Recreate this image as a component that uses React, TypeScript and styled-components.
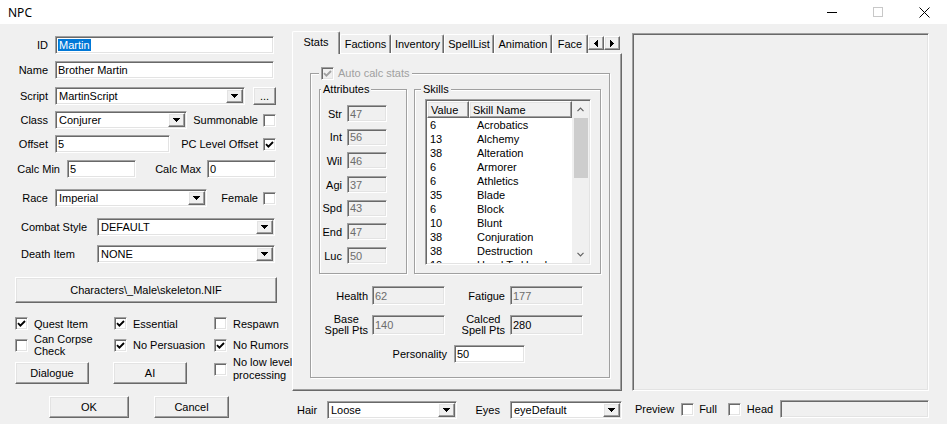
import React from 'react'
import styled, { createGlobalStyle, css } from 'styled-components'

const GlobalStyle = createGlobalStyle`
  html, body {
    margin: 0;
    padding: 0;
  }
  body {
    background: #f0f0f0;
    font-family: "Liberation Sans", Arial, sans-serif;
    font-size: 11px;
    color: #000;
  }
  * {
    box-sizing: border-box;
  }
`

const sunken = css`
  border: 1px solid;
  border-color: #a0a0a0 #fff #fff #a0a0a0;
  box-shadow: inset 1px 1px 0 #696969, inset -1px -1px 0 #e3e3e3;
`

const raised = css`
  border: 1px solid;
  border-color: #fff #696969 #696969 #fff;
  box-shadow: inset -1px -1px 0 #a0a0a0, inset 1px 1px 0 #e3e3e3;
`

const Window = styled.div`
  width: 947px;
  height: 424px;
  background: #f0f0f0;
  overflow: hidden;
  display: flex;
  flex-direction: column;
`

const TitleBar = styled.div`
  height: 24px;
  flex-shrink: 0;
  background: #fff;
  display: flex;
  align-items: center;
  padding-left: 8px;
  font-family: "Noto Sans", "Liberation Sans", sans-serif;
  font-size: 12px;
`

const Title = styled.div`
  flex: 1;
`

const WinControls = styled.div`
  display: flex;
  height: 100%;
`

const WinButton = styled.div`
  width: 46px;
  display: flex;
  align-items: center;
  justify-content: center;
`

const Body = styled.div`
  display: flex;
  flex: 1;
`

/* ---------- shared controls ---------- */

const TextBox = styled.div<{ $w: number; $h?: number; $disabled?: boolean; $dim?: boolean }>`
  ${sunken};
  width: ${p => p.$w}px;
  height: ${p => p.$h ?? 18}px;
  flex-shrink: 0;
  background: ${p => (p.$disabled ? '#f0f0f0' : '#fff')};
  color: ${p => (p.$dim ? '#6d6d6d' : '#000')};
  padding-left: 2px;
  display: flex;
  align-items: center;
  white-space: nowrap;
  overflow: hidden;
`

const Selected = styled.span`
  background: #0078d7;
  color: #fff;
  padding: 0 1px;
`

const Combo = styled.div<{ $w: number }>`
  ${sunken};
  width: ${p => p.$w}px;
  height: 18px;
  flex-shrink: 0;
  background: #fff;
  display: flex;
  align-items: center;
  padding: 1px 1px 1px 3px;
`

const ComboText = styled.div`
  flex: 1;
  white-space: nowrap;
  overflow: hidden;
`

const ComboButton = styled.div`
  ${raised};
  width: 17px;
  height: 14px;
  background: #f0f0f0;
  display: flex;
  align-items: center;
  justify-content: center;
`

const PushButton = styled.div<{ $w: number; $h?: number }>`
  ${raised};
  width: ${p => p.$w}px;
  height: ${p => p.$h ?? 22}px;
  flex-shrink: 0;
  background: #f0f0f0;
  display: flex;
  align-items: center;
  justify-content: center;
  white-space: nowrap;
`

const CheckBox = styled.span<{ $disabled?: boolean }>`
  ${sunken};
  width: 13px;
  height: 13px;
  flex-shrink: 0;
  background: ${p => (p.$disabled ? '#f0f0f0' : '#fff')};
  display: inline-flex;
  align-items: center;
  justify-content: center;
`

const DownArrow = () => (
  <svg width="7" height="4" viewBox="0 0 7 4" shapeRendering="crispEdges">
    <polygon points="0,0 7,0 3.5,4" fill="#000" />
  </svg>
)

const ComboBox = ({ w, value }: { w: number; value: string }) => (
  <Combo $w={w}>
    <ComboText>{value}</ComboText>
    <ComboButton>
      <DownArrow />
    </ComboButton>
  </Combo>
)

const Check = ({ checked, disabled }: { checked?: boolean; disabled?: boolean }) => (
  <CheckBox $disabled={disabled}>
    {checked && (
      <svg width="9" height="9" viewBox="0 0 9 9">
        <path
          d="M1 4.2 L3.4 6.6 L8 2"
          fill="none"
          stroke={disabled ? '#a0a0a0' : '#000'}
          strokeWidth="1.9"
        />
      </svg>
    )}
  </CheckBox>
)

/* ---------- left column ---------- */

const LeftColumn = styled.div`
  width: 292px;
  flex-shrink: 0;
  padding: 12px 16px 0 0;
  display: flex;
  flex-direction: column;
`

const FormRow = styled.div<{ $mt: number }>`
  display: flex;
  align-items: center;
  height: 18px;
  margin-top: ${p => p.$mt}px;
`

const FieldLabel = styled.div<{ $w: number; $left?: boolean }>`
  width: ${p => p.$w}px;
  flex-shrink: 0;
  text-align: ${p => (p.$left ? 'left' : 'right')};
  padding: ${p => (p.$left ? '0 0 0 21px' : '0 7px 0 0')};
  white-space: nowrap;
`

const SideLabel = styled.div<{ $pr?: number }>`
  flex: 1;
  text-align: right;
  padding-right: ${p => p.$pr ?? 5}px;
  white-space: nowrap;
`

const WideButtonRow = styled.div`
  margin: 14px 0 0 15px;
`

const CheckRow = styled.div<{ $mt: number; $h: number; $pl?: number }>`
  display: flex;
  align-items: center;
  height: ${p => p.$h}px;
  margin-top: ${p => p.$mt}px;
  padding-left: ${p => p.$pl ?? 15}px;
`

const CheckCell = styled.div<{ $w?: number; $top?: boolean }>`
  width: ${p => (p.$w ? `${p.$w}px` : 'auto')};
  flex-shrink: 0;
  display: flex;
  align-items: center;
  gap: 6px;
  white-space: nowrap;
  align-self: ${p => (p.$top ? 'flex-start' : 'center')};
  margin-top: ${p => (p.$top ? '-6px' : '0')};
`

const TwoLine = styled.div<{ $lh?: number; $center?: boolean }>`
  line-height: ${p => p.$lh ?? 12}px;
  text-align: ${p => (p.$center ? 'center' : 'left')};
  white-space: nowrap;
`

const ButtonGap = styled.div<{ $w: number }>`
  width: ${p => p.$w}px;
  flex-shrink: 0;
`

/* ---------- middle column ---------- */

const MiddleColumn = styled.div`
  width: 330px;
  flex-shrink: 0;
  padding-top: 7px;
  display: flex;
  flex-direction: column;
`

const TabStrip = styled.div`
  display: flex;
  align-items: flex-end;
  height: 22px;
`

const Tab = styled.div<{ $w: number; $active?: boolean }>`
  width: ${p => p.$w}px;
  height: ${p => (p.$active ? 23 : 19)}px;
  flex-shrink: 0;
  border-top: 1px solid #fff;
  border-left: 1px solid #fff;
  border-right: 1px solid #696969;
  box-shadow: inset -1px 0 0 #a0a0a0;
  border-radius: 2px 2px 0 0;
  background: #f0f0f0;
  display: flex;
  align-items: center;
  justify-content: center;
  padding-bottom: ${p => (p.$active ? 3 : 0)}px;
  white-space: nowrap;
  overflow: hidden;
  ${p =>
    p.$active &&
    css`
      position: relative;
      z-index: 1;
      margin-bottom: -1px;
    `}
`

const TabScroll = styled.div`
  display: flex;
  align-self: flex-start;
  margin-top: 5px;
`

const TabScrollButton = styled.div`
  ${raised};
  width: 16px;
  height: 14px;
  background: #f0f0f0;
  display: flex;
  align-items: center;
  justify-content: center;
`

const TabPanel = styled.div`
  width: 330px;
  height: 338px;
  border: 1px solid;
  border-color: #fff #696969 #696969 #fff;
  box-shadow: inset -1px -1px 0 #a0a0a0;
  display: flex;
  flex-direction: column;
`

const GroupBox = styled.fieldset<{ $w: number; $h: number; $ml: number; $mt: number }>`
  width: ${p => p.$w}px;
  height: ${p => p.$h}px;
  margin: ${p => p.$mt}px 0 0 ${p => p.$ml}px;
  padding: 0;
  min-width: 0;
  border: 1px solid #a0a0a0;
  box-shadow: 1px 1px 0 #fff, inset 1px 1px 0 #fff;
  flex-shrink: 0;
`

const Legend = styled.legend<{ $ml: number; $disabled?: boolean }>`
  margin-left: ${p => p.$ml}px;
  padding: 0 2px;
  line-height: 13px;
  height: 13px;
  background: #f0f0f0;
  color: ${p => (p.$disabled ? '#a0a0a0' : '#000')};
  display: flex;
  align-items: center;
  gap: 4px;
`

const GroupRow = styled.div`
  display: flex;
  margin: 3px 0 0 8px;
`

const AttrList = styled.div`
  display: flex;
  flex-direction: column;
  gap: 6.7px;
  margin-top: 9px;
`

const AttrRow = styled.div`
  display: flex;
  align-items: center;
  height: 17px;
`

const AttrLabel = styled.div`
  width: 27px;
  text-align: right;
  padding-right: 5px;
  flex-shrink: 0;
`

const ListView = styled.div`
  ${sunken};
  width: 166px;
  height: 166px;
  margin: 3px 0 0 10px;
  padding: 1px;
  background: #fff;
  display: flex;
  overflow: hidden;
`

const ListMain = styled.div`
  flex: 1;
  display: flex;
  flex-direction: column;
  overflow: hidden;
`

const ListHeader = styled.div`
  display: flex;
  height: 17px;
  flex-shrink: 0;
`

const HeaderCell = styled.div<{ $w?: number }>`
  ${raised};
  width: ${p => (p.$w ? `${p.$w}px` : 'auto')};
  flex: ${p => (p.$w ? '0 0 auto' : '1')};
  background: #f0f0f0;
  display: flex;
  align-items: center;
  padding-left: 3px;
`

const ListRow = styled.div`
  display: flex;
  height: 14px;
  line-height: 14px;
  flex-shrink: 0;
`

const ValueCell = styled.div`
  width: 42px;
  padding-left: 3px;
  flex-shrink: 0;
`

const NameCell = styled.div`
  padding-left: 8px;
  white-space: nowrap;
`

const ScrollBar = styled.div`
  width: 17px;
  flex-shrink: 0;
  background: #f0f0f0;
  display: flex;
  flex-direction: column;
`

const ScrollArrow = styled.div`
  height: 17px;
  display: flex;
  align-items: center;
  justify-content: center;
  flex-shrink: 0;
`

const ScrollThumb = styled.div`
  height: 60px;
  margin: 0 1px 0 2px;
  background: #cdcdcd;
`

const ScrollSpace = styled.div`
  flex: 1;
`

const StatRow = styled.div<{ $mt: number; $h: number }>`
  display: flex;
  align-items: center;
  height: ${p => p.$h}px;
  margin-top: ${p => p.$mt}px;
`

const StatLabel = styled.div<{ $w: number; $pr: number }>`
  width: ${p => p.$w}px;
  flex-shrink: 0;
  display: flex;
  justify-content: flex-end;
  padding-right: ${p => p.$pr}px;
  white-space: nowrap;
`

const BottomRow = styled.div`
  display: flex;
  align-items: center;
  height: 19px;
  margin-top: 9px;
`

const BottomLabel = styled.div<{ $w: number; $pl?: number; $pr?: number; $right?: boolean }>`
  width: ${p => p.$w}px;
  flex-shrink: 0;
  padding-left: ${p => p.$pl ?? 0}px;
  padding-right: ${p => p.$pr ?? 0}px;
  text-align: ${p => (p.$right ? 'right' : 'left')};
`

/* ---------- right column ---------- */

const RightColumn = styled.div`
  width: 297px;
  margin-left: 10px;
  flex-shrink: 0;
  padding-top: 9px;
  display: flex;
  flex-direction: column;
`

const PreviewPane = styled.div`
  height: 358px;
  border: 1px solid;
  border-color: #a0a0a0 #fff #fff #a0a0a0;
  box-shadow: inset 1px 1px 0 #696969, inset -1px -1px 0 #e3e3e3;
  background: #f0f0f0;
`

const PreviewBar = styled.div`
  display: flex;
  align-items: center;
  height: 18px;
  margin-top: 9px;
  padding-left: 3px;
`

const PreviewText = styled.span<{ $ml?: number; $mr?: number }>`
  margin-left: ${p => p.$ml ?? 0}px;
  margin-right: ${p => p.$mr ?? 0}px;
  white-space: nowrap;
`

const PreviewField = styled.div`
  ${sunken};
  flex: 1;
  height: 18px;
  background: #f0f0f0;
`

const attributes = [
  ['Str', '47'],
  ['Int', '56'],
  ['Wil', '46'],
  ['Agi', '37'],
  ['Spd', '43'],
  ['End', '47'],
  ['Luc', '50'],
]

const skills = [
  ['6', 'Acrobatics'],
  ['13', 'Alchemy'],
  ['38', 'Alteration'],
  ['6', 'Armorer'],
  ['6', 'Athletics'],
  ['35', 'Blade'],
  ['6', 'Block'],
  ['10', 'Blunt'],
  ['38', 'Conjuration'],
  ['38', 'Destruction'],
  ['10', 'Hand To Hand'],
]

const tabs = [
  { name: 'Factions', w: 51 },
  { name: 'Inventory', w: 53 },
  { name: 'SpellList', w: 50 },
  { name: 'Animation', w: 58 },
  { name: 'Face', w: 36 },
]

const Chevron = ({ up }: { up?: boolean }) => (
  <svg width="7" height="5" viewBox="0 0 7 5">
    <polyline
      points={up ? '0.5,4.2 3.5,1.2 6.5,4.2' : '0.5,0.8 3.5,3.8 6.5,0.8'}
      fill="none"
      stroke="#606060"
      strokeWidth="1.2"
    />
  </svg>
)

export default function App() {
  return (
    <Window>
      <GlobalStyle />
      <TitleBar>
        <Title>NPC</Title>
        <WinControls>
          <WinButton>
            <svg width="10" height="1">
              <rect width="10" height="1" fill="#000" />
            </svg>
          </WinButton>
          <WinButton>
            <svg width="10" height="10">
              <rect x="0.5" y="0.5" width="9" height="9" fill="none" stroke="#c8c8c8" />
            </svg>
          </WinButton>
          <WinButton>
            <svg width="11" height="11">
              <path d="M0.5 0.5L10.5 10.5M10.5 0.5L0.5 10.5" stroke="#000" strokeWidth="1" />
            </svg>
          </WinButton>
        </WinControls>
      </TitleBar>

      <Body>
        <LeftColumn>
          <FormRow $mt={0}>
            <FieldLabel $w={55}>ID</FieldLabel>
            <TextBox $w={219}>
              <Selected>Martin</Selected>
            </TextBox>
          </FormRow>
          <FormRow $mt={7}>
            <FieldLabel $w={55}>Name</FieldLabel>
            <TextBox $w={219}>Brother Martin</TextBox>
          </FormRow>
          <FormRow $mt={8}>
            <FieldLabel $w={55}>Script</FieldLabel>
            <ComboBox w={190} value="MartinScript" />
            <ButtonGap $w={8} />
            <PushButton $w={23} $h={18}>...</PushButton>
          </FormRow>
          <FormRow $mt={6}>
            <FieldLabel $w={55}>Class</FieldLabel>
            <ComboBox w={132} value="Conjurer" />
            <SideLabel>Summonable</SideLabel>
            <Check />
          </FormRow>
          <FormRow $mt={6}>
            <FieldLabel $w={55}>Offset</FieldLabel>
            <TextBox $w={115}>5</TextBox>
            <SideLabel>PC Level Offset</SideLabel>
            <Check checked />
          </FormRow>
          <FormRow $mt={7}>
            <FieldLabel $w={67}>Calc Min</FieldLabel>
            <TextBox $w={69}>5</TextBox>
            <SideLabel $pr={6}>Calc Max</SideLabel>
            <TextBox $w={69}>0</TextBox>
          </FormRow>
          <FormRow $mt={11}>
            <FieldLabel $w={55}>Race</FieldLabel>
            <ComboBox w={152} value="Imperial" />
            <SideLabel>Female</SideLabel>
            <Check />
          </FormRow>
          <FormRow $mt={11}>
            <FieldLabel $w={97} $left>
              Combat Style
            </FieldLabel>
            <ComboBox w={178} value="DEFAULT" />
          </FormRow>
          <FormRow $mt={9}>
            <FieldLabel $w={97} $left>
              Death Item
            </FieldLabel>
            <ComboBox w={178} value="NONE" />
          </FormRow>

          <WideButtonRow>
            <PushButton $w={262} $h={26}>
              Characters\_Male\skeleton.NIF
            </PushButton>
          </WideButtonRow>

          <CheckRow $mt={14} $h={13}>
            <CheckCell $w={99}>
              <Check checked />
              Quest Item
            </CheckCell>
            <CheckCell $w={100}>
              <Check checked />
              Essential
            </CheckCell>
            <CheckCell>
              <Check />
              Respawn
            </CheckCell>
          </CheckRow>
          <CheckRow $mt={3} $h={24}>
            <CheckCell $w={99}>
              <Check />
              <TwoLine>
                Can Corpse
                <br />
                Check
              </TwoLine>
            </CheckCell>
            <CheckCell $w={100}>
              <Check checked />
              No Persuasion
            </CheckCell>
            <CheckCell>
              <Check checked />
              No Rumors
            </CheckCell>
          </CheckRow>
          <CheckRow $mt={5} $h={22}>
            <PushButton $w={74}>Dialogue</PushButton>
            <ButtonGap $w={24} />
            <PushButton $w={74}>AI</PushButton>
            <ButtonGap $w={27} />
            <CheckCell $top>
              <Check />
              <TwoLine $lh={13}>
                No low level
                <br />
                processing
              </TwoLine>
            </CheckCell>
          </CheckRow>
          <CheckRow $mt={12} $h={22} $pl={49}>
            <PushButton $w={80}>OK</PushButton>
            <ButtonGap $w={25} />
            <PushButton $w={75}>Cancel</PushButton>
          </CheckRow>
        </LeftColumn>

        <MiddleColumn>
          <TabStrip>
            <Tab $w={48} $active>
              Stats
            </Tab>
            {tabs.map(t => (
              <Tab key={t.name} $w={t.w}>
                {t.name}
              </Tab>
            ))}
            <TabScroll>
              <TabScrollButton>
                <svg width="4" height="7" viewBox="0 0 4 7" shapeRendering="crispEdges">
                  <polygon points="4,0 4,7 0,3.5" fill="#000" />
                </svg>
              </TabScrollButton>
              <TabScrollButton>
                <svg width="4" height="7" viewBox="0 0 4 7" shapeRendering="crispEdges">
                  <polygon points="0,0 0,7 4,3.5" fill="#000" />
                </svg>
              </TabScrollButton>
            </TabScroll>
          </TabStrip>

          <TabPanel>
            <GroupBox $w={300} $h={311} $ml={17} $mt={13}>
              <Legend $ml={8} $disabled>
                <Check checked disabled />
                Auto calc stats
              </Legend>
              <GroupRow>
                <GroupBox $w={88} $h={191} $ml={0} $mt={0}>
                  <Legend $ml={1}>Attributes</Legend>
                  <AttrList>
                    {attributes.map(([label, value]) => (
                      <AttrRow key={label}>
                        <AttrLabel>{label}</AttrLabel>
                        <TextBox $w={40} $h={17} $disabled $dim>
                          {value}
                        </TextBox>
                      </AttrRow>
                    ))}
                  </AttrList>
                </GroupBox>
                <GroupBox $w={187} $h={191} $ml={7} $mt={0}>
                  <Legend $ml={6}>Skills</Legend>
                  <ListView>
                    <ListMain>
                      <ListHeader>
                        <HeaderCell $w={42}>Value</HeaderCell>
                        <HeaderCell>Skill Name</HeaderCell>
                      </ListHeader>
                      {skills.map(([value, name]) => (
                        <ListRow key={name}>
                          <ValueCell>{value}</ValueCell>
                          <NameCell>{name}</NameCell>
                        </ListRow>
                      ))}
                    </ListMain>
                    <ScrollBar>
                      <ScrollArrow>
                        <Chevron up />
                      </ScrollArrow>
                      <ScrollThumb />
                      <ScrollSpace />
                      <ScrollArrow>
                        <Chevron />
                      </ScrollArrow>
                    </ScrollBar>
                  </ListView>
                </GroupBox>
              </GroupRow>

              <StatRow $mt={12} $h={19}>
                <StatLabel $w={61} $pr={4}>
                  Health
                </StatLabel>
                <TextBox $w={73} $h={19} $disabled $dim>
                  62
                </TextBox>
                <StatLabel $w={65} $pr={5}>
                  Fatigue
                </StatLabel>
                <TextBox $w={73} $h={19} $disabled $dim>
                  177
                </TextBox>
              </StatRow>
              <StatRow $mt={10} $h={20}>
                <StatLabel $w={61} $pr={4}>
                  <TwoLine $lh={11} $center>
                    Base
                    <br />
                    Spell Pts
                  </TwoLine>
                </StatLabel>
                <TextBox $w={73} $h={20} $disabled $dim>
                  140
                </TextBox>
                <StatLabel $w={65} $pr={5}>
                  <TwoLine $lh={11} $center>
                    Calced
                    <br />
                    Spell Pts
                  </TwoLine>
                </StatLabel>
                <TextBox $w={73} $h={20} $disabled>
                  280
                </TextBox>
              </StatRow>
              <StatRow $mt={10} $h={18}>
                <StatLabel $w={143} $pr={7}>
                  Personality
                </StatLabel>
                <TextBox $w={71}>50</TextBox>
              </StatRow>
            </GroupBox>
          </TabPanel>

          <BottomRow>
            <BottomLabel $w={35} $pl={5}>
              Hair
            </BottomLabel>
            <ComboBox w={130} value="Loose" />
            <BottomLabel $w={53} $pr={10} $right>
              Eyes
            </BottomLabel>
            <ComboBox w={112} value="eyeDefault" />
          </BottomRow>
        </MiddleColumn>

        <RightColumn>
          <PreviewPane />
          <PreviewBar>
            <PreviewText $mr={7}>Preview</PreviewText>
            <Check />
            <PreviewText $ml={5} $mr={11}>
              Full
            </PreviewText>
            <Check />
            <PreviewText $ml={6} $mr={7}>
              Head
            </PreviewText>
            <PreviewField />
          </PreviewBar>
        </RightColumn>
      </Body>
    </Window>
  )
}
